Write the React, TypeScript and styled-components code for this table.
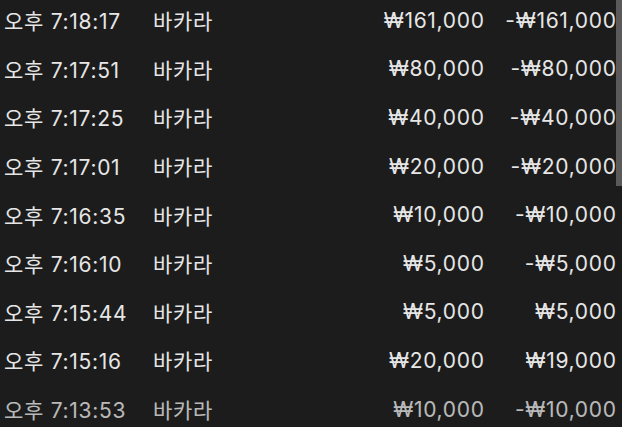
import React from "react"
import styled, { createGlobalStyle } from "styled-components"

const GlobalStyle = createGlobalStyle`
  html, body {
    margin: 0;
    padding: 0;
    background: #1c1c1c;
    overflow: hidden;
  }
`

const Screen = styled.div`
  position: relative;
  width: 622px;
  height: 427px;
  overflow: hidden;
  background: #1c1c1c;
  font-family: Inter, "Noto Sans CJK KR", sans-serif;
  color: #e6e6e6;
`

const List = styled.div`
  display: flex;
  flex-direction: column;
  margin-top: -4px;
  padding-right: 6px;
`

const Row = styled.div<{ $dim?: boolean }>`
  display: grid;
  grid-template-columns: 149px 1fr 160px 132px;
  align-items: center;
  height: 48.6px;
  font-size: 21px;
  letter-spacing: 0.7px;
  padding-left: 4px;
  opacity: ${(p) => (p.$dim ? 0.78 : 1)};
`

const Cell = styled.span<{ $right?: boolean }>`
  white-space: nowrap;
  text-align: ${(p) => (p.$right ? "right" : "left")};
  margin-right: ${(p) => (p.$right ? "-0.7px" : "0")};
`

const Scrollbar = styled.div`
  position: absolute;
  top: 0;
  right: 0;
  width: 6px;
  height: 186px;
  background: #5a5a5a;
`

const rows = [
  ["오후 7:18:17", "₩161,000", "-₩161,000"],
  ["오후 7:17:51", "₩80,000", "-₩80,000"],
  ["오후 7:17:25", "₩40,000", "-₩40,000"],
  ["오후 7:17:01", "₩20,000", "-₩20,000"],
  ["오후 7:16:35", "₩10,000", "-₩10,000"],
  ["오후 7:16:10", "₩5,000", "-₩5,000"],
  ["오후 7:15:44", "₩5,000", "₩5,000"],
  ["오후 7:15:16", "₩20,000", "₩19,000"],
  ["오후 7:13:53", "₩10,000", "-₩10,000"],
]

export default function App() {
  return (
    <Screen>
      <GlobalStyle />
      <List>
        {rows.map(([time, bet, result], i) => (
          <Row key={time} $dim={i === rows.length - 1}>
            <Cell>{time}</Cell>
            <Cell>바카라</Cell>
            <Cell $right>{bet}</Cell>
            <Cell $right>{result}</Cell>
          </Row>
        ))}
      </List>
      <Scrollbar />
    </Screen>
  )
}
